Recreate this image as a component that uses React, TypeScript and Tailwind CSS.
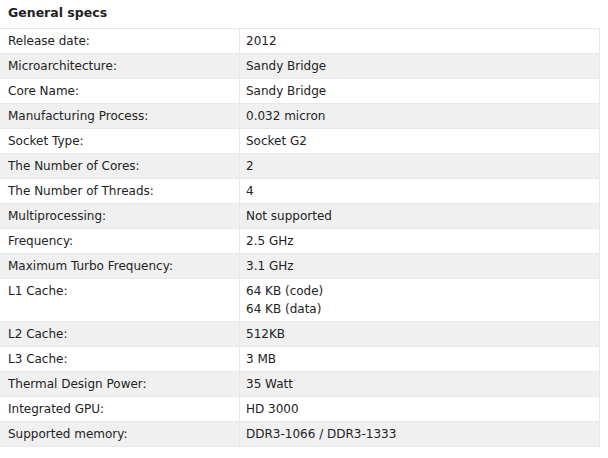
const specs: { label: string; value: string[] }[] = [
  { label: 'Release date:', value: ['2012'] },
  { label: 'Microarchitecture:', value: ['Sandy Bridge'] },
  { label: 'Core Name:', value: ['Sandy Bridge'] },
  { label: 'Manufacturing Process:', value: ['0.032 micron'] },
  { label: 'Socket Type:', value: ['Socket G2'] },
  { label: 'The Number of Cores:', value: ['2'] },
  { label: 'The Number of Threads:', value: ['4'] },
  { label: 'Multiprocessing:', value: ['Not supported'] },
  { label: 'Frequency:', value: ['2.5 GHz'] },
  { label: 'Maximum Turbo Frequency:', value: ['3.1 GHz'] },
  { label: 'L1 Cache:', value: ['64 KB (code)', '64 KB (data)'] },
  { label: 'L2 Cache:', value: ['512KB'] },
  { label: 'L3 Cache:', value: ['3 MB'] },
  { label: 'Thermal Design Power:', value: ['35 Watt'] },
  { label: 'Integrated GPU:', value: ['HD 3000'] },
  { label: 'Supported memory:', value: ['DDR3-1066 / DDR3-1333'] },
]

export default function App() {
  return (
    <div className="w-[608px] h-[458px] bg-white text-[#222] font-['DejaVu_Sans',Verdana,sans-serif]">
      {/* Heading */}
      <div className="h-[28px] pl-[8px] pt-[4px] text-[12.5px] font-bold leading-[18px]">General specs</div>

      {/* Spec table */}
      <div className="w-[600px] border-t border-[#e8e8e8] text-[12px] leading-[18px]">
        {specs.map((row, i) => (
          <div
            key={row.label}
            className={`flex border-b border-[#e8e8e8] ${i % 2 === 1 ? 'bg-[#f0f0f0]' : 'bg-white'}`}
          >
            <div className="w-[240px] shrink-0 border-r border-[#e8e8e8] pl-[8px] py-[3px]">{row.label}</div>
            <div className="flex-1 pl-[6px] py-[3px] border-r border-[#e8e8e8]">
              {row.value.map((v) => (
                <div key={v}>{v}</div>
              ))}
            </div>
          </div>
        ))}
      </div>
    </div>
  )
}
